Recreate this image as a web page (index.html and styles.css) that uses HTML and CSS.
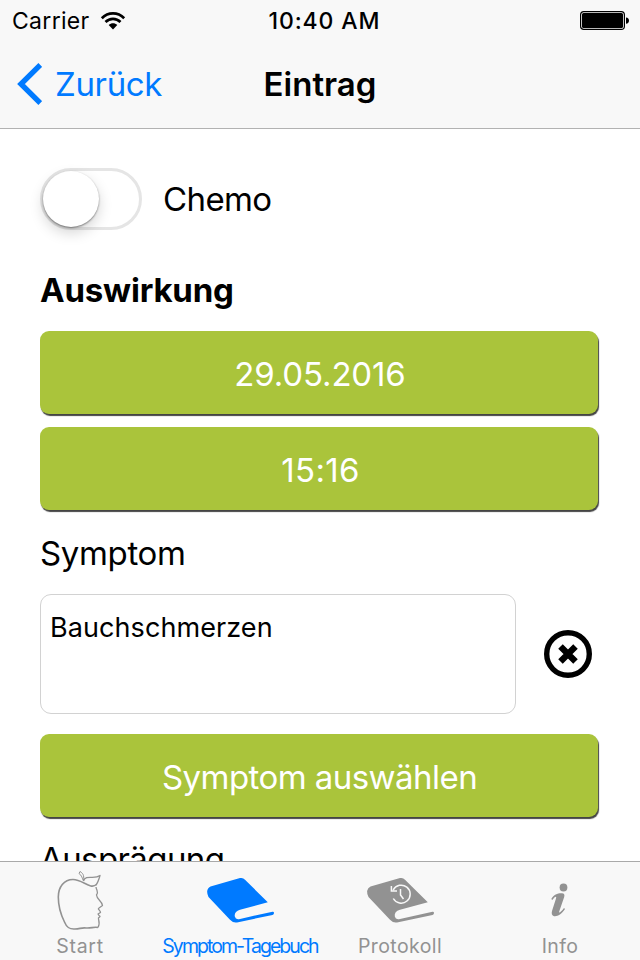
FILE: index.html
```html
<!DOCTYPE html>
<html lang="de">
<head>
<meta charset="utf-8">
<title>Eintrag</title>
<link rel="stylesheet" href="styles.css">
</head>
<body>
<div class="screen">
  <header class="top">
    <div class="status">
      <div class="carrier"><span class="carrier-name">Carrier</span>
        <svg class="wifi" width="26" height="20" viewBox="0 0 26 20"><g fill="none" stroke="#000" stroke-width="2.7"><path d="M1.8 7.2C8.2 .8 17.8 .8 24.200 7.200"/><path d="M5.500 11C9.800 6.800 16.200 6.800 20.500 11"/></g><path d="M8.700 14.100C11.200 11.600 14.800 11.600 17.300 14.100L13 18.500Z"/></svg>
      </div>
      <span class="clock">10:40 AM</span>
      <div class="battery"><svg width="50" height="20" viewBox="0 0 50 20"><rect x=".6" y=".6" width="43.800" height="17.800" rx="3.200" fill="none" stroke="#000" stroke-width="1.200"/><rect x="2" y="2" width="41" height="15" rx="1.500"/><path d="M46 6.500C50 6.500 50 12.800 46 12.800Z"/></svg></div>
    </div>
    <nav class="nav">
      <a class="back"><svg width="26" height="42" viewBox="0 0 26 42"><path d="M24.300 2L5 21L24.300 40" fill="none" stroke="#007aff" stroke-width="5.400"/></svg><span class="back-label">Zurück</span></a>
      <h1 class="title">Eintrag</h1>
      <span></span>
    </nav>
  </header>
  <main class="content">
    <div class="toggle-row"><span class="switch"><span class="knob"></span></span><span class="label chemo">Chemo</span></div>
    <h2 class="heading">Auswirkung</h2>
    <div class="buttons"><button class="btn"><span class="date">29.05.2016</span></button><button class="btn"><span class="time">15:16</span></button></div>
    <div class="label symptom">Symptom</div>
    <div class="field-row">
      <div class="field"><span>Bauchschmerzen</span></div>
      <svg class="clear" width="48" height="48" viewBox="0 0 48 48"><circle cx="24" cy="24" r="21.300" fill="none" stroke="#000" stroke-width="5.400"/><path d="M16.500 16.500L31.500 31.500M31.500 16.500L16.500 31.500" stroke="#000" stroke-width="6.400"/></svg>
    </div>
    <button class="btn select"><span class="choose">Symptom auswählen</span></button>
    <div class="label severity">Ausprägung</div>
  </main>
  <footer class="tabs">
    <a class="tab">
      <svg class="icon" width="80" height="67" viewBox="0 0 80 67" fill="none" stroke="#929292" stroke-width="1.300" stroke-linejoin="round"><path d="M56.500 17.500C50 23 43 12.500 33 12.500C24 12.500 18.300 20 18.300 30C18.300 39 21 48 24.500 55C26.500 60 29 62.500 35 62C40 62 41 60.500 46 61C51 61.500 54 59.500 58 60.500" stroke-width="1.600"/><path d="M58 60.500C60 57 59 54 58.500 52C57.500 50 62 50 59 48.500L58 47L60.500 45.500C60.500 43.500 57 42 59 41L62.500 38.500C62 34 57 33 56.500 28C59 25 56.500 24 56 20"/><path d="M43.500 14C46 7 54 13 60 8.500C58.500 14 57.500 16 56 18"/><path d="M43.500 13.500C44.500 8 42.500 6 40 4.500L39 6.500C42 8.500 42 11 43.500 14Z" stroke-width="1"/></svg>
      <span class="tab-label start">Start</span>
    </a>
    <a class="tab active">
      <svg class="icon" width="80" height="67" viewBox="0 0 80 67" fill="#007aff"><path d="M10.500 19.500L40 11.100Q43 10.300 45 12.800L67.800 35.200L40 42.700Q34 44.500 34.800 49.500Q35.600 53 40 51.900L72.500 44.700Q74 44.500 74 46Q74 47.500 72.500 48L37 55.400Q33 56.100 30 52.800L8.500 30Q5 22.500 10.500 19.500Z"/></svg>
      <span class="tab-label diary">Symptom-Tagebuch</span>
    </a>
    <a class="tab">
      <svg class="icon" width="80" height="67" viewBox="0 0 80 67" fill="#929292"><path d="M10.500 19.500L40 11.100Q43 10.300 45 12.800L67.800 35.200L40 42.700Q34 44.500 34.800 49.500Q35.600 53 40 51.900L72.500 44.700Q74 44.500 74 46Q74 47.500 72.500 48L37 55.400Q33 56.100 30 52.800L8.500 30Q5 22.500 10.500 19.500Z"/><g fill="none" stroke="#f8f8f8" stroke-width="1.500"><path d="M33.200 23A9 9 0 1 1 33.300 31.500M31.400 19V24H37M40.500 22V28L43.500 32"/></g></svg>
      <span class="tab-label log">Protokoll</span>
    </a>
    <a class="tab">
      <svg class="icon" width="80" height="67" viewBox="0 0 80 67" fill="#929292"><g transform="translate(0 1)"><circle cx="43.500" cy="19.500" r="3.900"/><path d="M31.300 31C34 26.500 38 25 42 25.300Q45.200 25.500 44.200 29L39.200 43.500C38.500 46 41 44 44 40L45 41C41 47 37 48.800 33.500 48Q31 47 32 43L36 30.500C36.700 27.500 35 28.500 32.200 32Z"/></g></svg>
      <span class="tab-label info">Info</span>
    </a>
  </footer>
</div>
</body>
</html>
```
FILE: styles.css
```css
* { box-sizing: border-box; }
body { margin: 0; background: #fff; color: #000; font-family: Inter, "Liberation Sans", sans-serif; }
span { white-space: nowrap; }
.screen { width: 640px; height: 960px; display: flex; flex-direction: column; overflow: hidden; }
.top { height: 129px; flex: none; background: #f8f8f8; border-bottom: 1px solid #b2b2b2; }
.status { height: 40px; display: grid; grid-template-columns: 1fr auto 1fr; align-items: center; padding: 1px 10px 0 12px; font-size: 23px; line-height: 40px; }
.carrier { display: flex; align-items: center; gap: 10px; }
.carrier-name { letter-spacing: .3px; }
.clock { font-weight: 550; letter-spacing: .9px; padding-left: 7px; }
.battery { display: flex; justify-content: flex-end; }
.nav { height: 88px; display: grid; grid-template-columns: 1fr auto 1fr; align-items: center; padding: 0 16px; font-size: 33px; }
.back { display: flex; align-items: center; gap: 13px; color: #007aff; }
.back-label { letter-spacing: -.35px; }
.title { margin: 0; font-size: 33px; font-weight: 600; }
.content { flex: 1; min-height: 0; overflow: hidden; padding: 39px 40px 0; font-size: 33px; line-height: 40px; }
.toggle-row { height: 62px; display: flex; align-items: center; gap: 21px; }
.switch { width: 102px; height: 62px; border: 3px solid #e5e5e5; border-radius: 31px; }
.knob { display: block; width: 56px; height: 56px; border-radius: 50%; background: #fff; box-shadow: 0 1px 2px rgba(0,0,0,.45), 0 6px 14px rgba(0,0,0,.17); }
.chemo { letter-spacing: -.6px; }
.heading { margin: 40px 0 21px; font-size: 33px; line-height: 40px; font-weight: 700; letter-spacing: -.2px; }
.buttons { display: grid; gap: 13px; }
.btn { display: block; width: 558px; height: 83px; padding: 3px 0 0; border: 0; border-radius: 9px; background: #aac43b; color: #fff; font: 33px/40px Inter, "Liberation Sans", sans-serif; box-shadow: 1px 2px 1px #444; }
.date { letter-spacing: -.15px; padding-left: 2px; }
.time { letter-spacing: .3px; padding-left: 3px; }
.choose { letter-spacing: -.55px; padding-left: 1px; }
.symptom { margin: 23px 0 21px; letter-spacing: -.35px; }
.field-row { display: flex; align-items: center; gap: 28px; }
.field { width: 476px; height: 120px; padding: 13px 9px; border: 1px solid #d2d2d2; border-radius: 11px; font-size: 27px; letter-spacing: .08px; }
.select { margin-top: 20px; }
.severity { margin-top: 22px; letter-spacing: -.6px; }
.tabs { flex: none; height: 99px; display: grid; grid-template-columns: repeat(4, 160px); background: #f8f8f8; border-top: 1px solid #a9a9a9; }
.tab { display: flex; flex-direction: column; align-items: center; color: #929292; }
.icon { margin-top: 5px; }
.active { color: #007aff; }
.tab-label { font-size: 19.500px; line-height: 24px; letter-spacing: .4px; }
.start { letter-spacing: .7px; }
.diary { letter-spacing: -1.95px; }
```
